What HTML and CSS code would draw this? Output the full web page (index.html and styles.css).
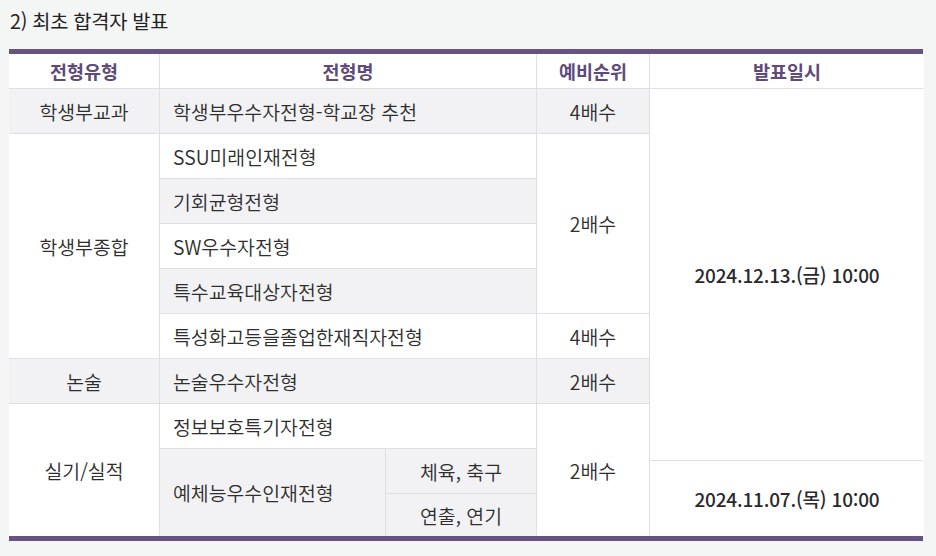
FILE: index.html
```html
<!DOCTYPE html>
<html lang="ko">
<head>
<meta charset="utf-8">
<title>최초 합격자 발표</title>
<link rel="stylesheet" href="styles.css">
</head>
<body>
<div class="page">
  <h3 class="title">2) 최초 합격자 발표</h3>
  <div class="tbl">
    <div class="th c-type">전형유형</div>
    <div class="th c-name2">전형명</div>
    <div class="th c-rank">예비순위</div>
    <div class="th c-date">발표일시</div>

    <div class="td gray c-type r2">학생부교과</div>
    <div class="td gray left c-name2 r2">학생부우수자전형-학교장 추천</div>
    <div class="td gray c-rank r2">4배수</div>
    <div class="td date c-date d1">2024.12.13.(금) 10:00</div>

    <div class="td c-type r3-8">학생부종합</div>
    <div class="td left c-name2 r3">SSU미래인재전형</div>
    <div class="td gray left c-name2 r4">기회균형전형</div>
    <div class="td left c-name2 r5">SW우수자전형</div>
    <div class="td gray left c-name2 r6">특수교육대상자전형</div>
    <div class="td left c-name2 r7">특성화고등을졸업한재직자전형</div>
    <div class="td c-rank r3-7">2배수</div>
    <div class="td c-rank r7">4배수</div>

    <div class="td gray c-type r8">논술</div>
    <div class="td gray left c-name2 r8">논술우수자전형</div>
    <div class="td gray c-rank r8">2배수</div>

    <div class="td c-type r9-13">실기/실적</div>
    <div class="td left c-name2 r9">정보보호특기자전형</div>
    <div class="td gray left c-name r10-13">예체능우수인재전형</div>
    <div class="td gray c-sub r10-12">체육, 축구</div>
    <div class="td gray c-sub r12">연출, 연기</div>
    <div class="td c-rank r9-13">2배수</div>
    <div class="td date c-date d2">2024.11.07.(목) 10:00</div>
  </div>
</div>
</body>
</html>
```

FILE: styles.css
```css
html, body {
  margin: 0;
  padding: 0;
  background: #f4f5f5;
}
body {
  font-family: "Noto Sans CJK KR", "Noto Sans", sans-serif;
  color: #2e2e2e;
}
.page {
  padding: 7px 13px 0 9px;
}
.title {
  margin: 0 0 0 1px;
  font-size: 19.8px;
  font-weight: 400;
  line-height: 28px;
  color: #222;
  letter-spacing: -0.3px;
}
.tbl {
  margin-top: 14px;
  width: 914px;
  display: grid;
  grid-template-columns: 150px 225px 150px 112px 274px;
  grid-template-rows: 34px 44px 44px 44px 44px 44px 44px 44px 44px 11px 32px 42px;
  gap: 1px;
  background: #dfe0e3;
  border-top: 5px solid #67537f;
  border-bottom: 5px solid #67537f;
}
.th, .td {
  display: flex;
  align-items: center;
  justify-content: center;
  background: #fff;
  font-size: 19.4px;
  font-weight: 350;
  white-space: nowrap;
}
.th {
  font-size: 18.5px;
  font-weight: 700;
  color: #5f4a7c;
  grid-row: 1;
}
.td.gray { background: #f2f2f4; }
.td.left { justify-content: flex-start; padding-left: 13px; }
.td.date {
  font-weight: 500;
  color: #2a2a2e;
  font-size: 19px;
  letter-spacing: -0.2px;
}

.c-type { grid-column: 1; }
.c-name { grid-column: 2; }
.c-sub { grid-column: 3; }
.c-name2 { grid-column: 2 / 4; }
.c-rank { grid-column: 4; }
.c-date { grid-column: 5; }

.r2 { grid-row: 2; }
.r3 { grid-row: 3; }
.r4 { grid-row: 4; }
.r5 { grid-row: 5; }
.r6 { grid-row: 6; }
.r7 { grid-row: 7; }
.r8 { grid-row: 8; }
.r9 { grid-row: 9; }
.r12 { grid-row: 12; }
.r3-8 { grid-row: 3 / 8; }
.r3-7 { grid-row: 3 / 7; }
.r9-13 { grid-row: 9 / 13; }
.r10-13 { grid-row: 10 / 13; }
.r10-12 { grid-row: 10 / 12; }
.d1 { grid-row: 2 / 11; }
.d2 { grid-row: 11 / 13; }
```
